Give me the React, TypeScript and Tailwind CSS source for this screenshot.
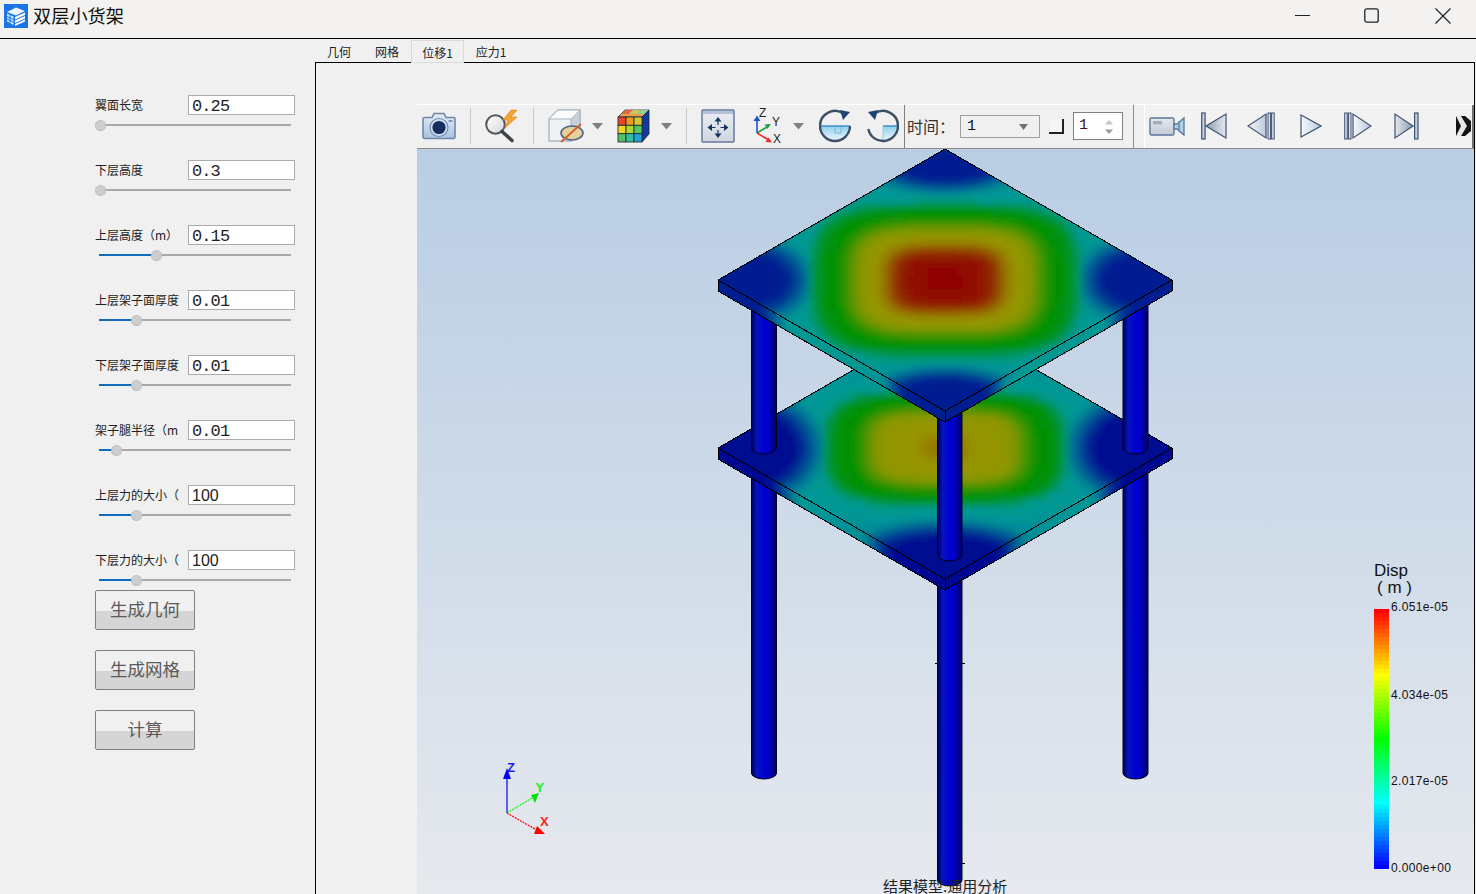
import React from "react";

type RGB = [number, number, number];
const mix = (stops: [number, RGB][], v: number): string => {
  const x = Math.max(0, Math.min(1, v));
  for (let i = 1; i < stops.length; i++) {
    if (x <= stops[i][0]) {
      const [p0, c0] = stops[i - 1];
      const [p1, c1] = stops[i];
      const t = (x - p0) / (p1 - p0);
      return `rgb(${c0.map((c, k) => Math.round(c + (c1[k] - c) * t)).join(",")})`;
    }
  }
  const l = stops[stops.length - 1][1];
  return `rgb(${l.join(",")})`;
};

const dimTop: [number, RGB][] = [[0, [0, 30, 145]], [0.25, [0, 152, 150]], [0.5, [0, 145, 0]], [0.75, [150, 150, 0]], [1, [143, 0, 0]]];
const dimLow: [number, RGB][] = [[0, [0, 8, 145]], [0.25, [0, 152, 150]], [0.5, [0, 145, 0]], [0.75, [150, 150, 0]], [1, [143, 0, 0]]];
const full: [number, RGB][] = [[0, [0, 0, 255]], [0.25, [0, 255, 255]], [0.5, [0, 255, 0]], [0.75, [255, 255, 0]], [1, [255, 0, 0]]];

const lerpTable = (tbl: [number, number][], r: number) => {
  for (let i = 1; i < tbl.length; i++) {
    if (r <= tbl[i][0]) {
      const t = (r - tbl[i - 1][0]) / (tbl[i][0] - tbl[i - 1][0]);
      return tbl[i - 1][1] + (tbl[i][1] - tbl[i - 1][1]) * t;
    }
  }
  return tbl[tbl.length - 1][1];
};

const radius = (a: number, b: number) => Math.pow(Math.pow(Math.abs(a), 3.6) + Math.pow(Math.abs(b), 3.6), 1 / 3.6);
const smooth = (e0: number, e1: number, x: number) => {
  const t = Math.max(0, Math.min(1, (x - e0) / (e1 - e0)));
  return t * t * (3 - 2 * t);
};
const lobe = (a: number, b: number, sideC: number, sideA: number, sideB: number, tipC: number, tipB: number, tipA: number) => {
  const ax = Math.abs(a);
  const bx = Math.abs(b);
  const d1 = Math.hypot((ax - sideC) / sideA, bx / sideB);
  const d2 = Math.hypot((bx - tipC) / tipB, ax / tipA);
  return 0.26 * smooth(0.55, 1.3, Math.min(d1, d2));
};

const topTable: [number, number][] = [[0, 1], [0.14, 0.98], [0.21, 0.93], [0.26, 0.82], [0.3, 0.76], [0.38, 0.72], [0.44, 0.58], [0.48, 0.5], [0.55, 0.46], [0.6, 0.3], [0.66, 0.25], [1, 0.2]];
const lowTable: [number, number][] = [[0, 0.83], [0.06, 0.8], [0.12, 0.76], [0.3, 0.73], [0.36, 0.6], [0.41, 0.5], [0.49, 0.47], [0.54, 0.3], [0.62, 0.25], [1, 0.2]];
const fieldTop = (a: number, b: number) => Math.min(lerpTable(topTable, radius(a, b)), lobe(a, b, 0.85, 0.24, 0.3, 0.88, 0.2, 0.32) + (radius(a, b) < 0.6 ? 1 : 0));
const fieldLow = (a: number, b: number) => {
  const r = radius(a, b * 1.2);
  return Math.min(lerpTable(lowTable, r), lobe(a, b, 0.84, 0.27, 0.38, 0.86, 0.28, 0.42) + (r < 0.54 ? 1 : 0));
};

const HW = 227;
const HH = 131;
const CX = 945;
const T = 11;

function Plate({ id, cy, field, stops }: { id: string; cy: number; field: (a: number, b: number) => number; stops: [number, RGB][] }) {
  const cells: React.ReactNode[] = [];
  const step = 7;
  for (let y = cy - HH - 14; y < cy + HH + 14; y += step) {
    for (let x = CX - HW - 14; x < CX + HW + 14; x += step) {
      const a = (x + step / 2 - CX) / HW;
      const b = (y + step / 2 - cy) / HH;
      cells.push(<rect key={`${x}-${y}`} x={x} y={y} width={step + 0.5} height={step + 0.5} fill={mix(stops, field(a, b))} />);
    }
  }
  const edgeStops = Array.from({ length: 31 }, (_, i) => {
    const t = i / 30;
    return <stop key={i} offset={t} stopColor={mix(stops, field(-1 + t, t))} />;
  });
  return (
    <g>
      <defs>
        <clipPath id={`clip-${id}`}>
          <polygon points={`${CX},${cy - HH} ${CX + HW},${cy} ${CX},${cy + HH} ${CX - HW},${cy}`} />
        </clipPath>
        <filter id={`blur-${id}`} filterUnits="userSpaceOnUse" x={CX - HW - 30} y={cy - HH - 30} width={2 * HW + 60} height={2 * HH + 60}>
          <feGaussianBlur stdDeviation="3.5" />
        </filter>
        <linearGradient id={`sideL-${id}`} gradientUnits="userSpaceOnUse" x1={CX - HW} x2={CX} y1="0" y2="0">
          {edgeStops}
        </linearGradient>
        <linearGradient id={`sideR-${id}`} gradientUnits="userSpaceOnUse" x1={CX + HW} x2={CX} y1="0" y2="0">
          {edgeStops}
        </linearGradient>
      </defs>
      <polygon points={`${CX - HW},${cy} ${CX},${cy + HH} ${CX},${cy + HH + T} ${CX - HW},${cy + T}`} fill={`url(#sideL-${id})`} />
      <polygon points={`${CX + HW},${cy} ${CX},${cy + HH} ${CX},${cy + HH + T} ${CX + HW},${cy + T}`} fill={`url(#sideR-${id})`} />
      <g clipPath={`url(#clip-${id})`}>
        <g filter={`url(#blur-${id})`}>{cells}</g>
      </g>
      <g fill="none" stroke="#000" strokeWidth="1" shapeRendering="crispEdges">
        <polygon points={`${CX},${cy - HH} ${CX + HW},${cy} ${CX},${cy + HH} ${CX - HW},${cy}`} />
        <polyline points={`${CX - HW},${cy} ${CX - HW},${cy + T} ${CX},${cy + HH + T} ${CX + HW},${cy + T} ${CX + HW},${cy}`} />
        <line x1={CX} y1={cy + HH} x2={CX} y2={cy + HH + T} />
      </g>
    </g>
  );
}

function Leg({ x1, x2, y1, y2, fill = "url(#legGrad)" }: { x1: number; x2: number; y1: number; y2: number; fill?: string }) {
  const rx = (x2 - x1) / 2;
  return <path d={`M${x1} ${y1} V${y2} A${rx} 6 0 0 0 ${x2} ${y2} V${y1} Z`} fill={fill} stroke="#000018" strokeWidth="1" />;
}

function Scene() {
  return (
    <svg className="absolute inset-0" width={1056} height={745} viewBox="417 149 1056 745">
      <defs>
        <linearGradient id="legGrad" x1="0" x2="1" y1="0" y2="0">
          <stop offset="0" stopColor="#00006e" />
          <stop offset="0.12" stopColor="#000a8c" />
          <stop offset="0.2" stopColor="#0616bc" />
          <stop offset="0.5" stopColor="#0000d0" />
          <stop offset="0.72" stopColor="#0000c8" />
          <stop offset="0.8" stopColor="#000096" />
          <stop offset="1" stopColor="#000070" />
        </linearGradient>
      </defs>
      <Leg x1={751.5} x2={776.5} y1={470} y2={773} />
      <Leg x1={1123} x2={1148} y1={470} y2={773} />
      <Leg x1={937.5} x2={962} y1={580} y2={880} />
      <path d="M935 663.5H938M962 663.5H965M962 863.5H965" stroke="#000" strokeWidth="1" shapeRendering="crispEdges" />
      <Plate id="low" cy={448} field={fieldLow} stops={dimLow} />
      <Leg x1={751.5} x2={776.5} y1={300} y2={448} />
      <Leg x1={1123} x2={1148} y1={300} y2={448} />
      <Leg x1={937.5} x2={962} y1={410} y2={555} />
      <Plate id="top" cy={280} field={fieldTop} stops={dimTop} />
      {/* triad */}
      <g>
        <line x1="507" y1="813" x2="507" y2="775" stroke="#0000ff" strokeWidth="1.2" />
        <polygon points="507,768 503,779 511,779" fill="#0000ff" />
        <line x1="507" y1="813" x2="532" y2="798" stroke="#00ff00" strokeWidth="1.2" strokeDasharray="2 1" />
        <polygon points="539,793 531,795 535,803" fill="#00e000" />
        <line x1="507" y1="813" x2="535" y2="829" stroke="#ff0000" strokeWidth="1.2" strokeDasharray="2 1" />
        <polygon points="545,834 537,826 534,834" fill="#ff0000" />
        <text x="507" y="772" fontFamily="Liberation Sans" fontWeight="700" fontSize="13" fill="#1a1aff">Z</text>
        <text x="535.5" y="792" fontFamily="Liberation Sans" fontWeight="700" fontSize="13" fill="#22ee22">Y</text>
        <text x="540" y="826" fontFamily="Liberation Sans" fontWeight="700" fontSize="13" fill="#ff2222">X</text>
      </g>
    </svg>
  );
}

const Sep = ({ ml }: { ml: string }) => <div className={`h-[36px] w-px bg-[#c9c9c9] ${ml}`} />;

const Caret = ({ ml }: { ml: string }) => (
  <svg width="11" height="7" viewBox="0 0 11 7" className={ml}>
    <polygon points="0,0 11,0 5.5,6.5" fill="#808080" />
  </svg>
);

const CameraIcon = () => (
  <svg width="34" height="30" viewBox="0 0 34 30" className="ml-[5px]">
    <defs>
      <linearGradient id="camG" x1="0" x2="0" y1="0" y2="1">
        <stop offset="0" stopColor="#e6edf6" />
        <stop offset="1" stopColor="#aac2de" />
      </linearGradient>
    </defs>
    <path d="M2.5 6.5H10L12 2.5H22L24 6.5H31.5A1.5 1.5 0 0 1 33 8V26A1.5 1.5 0 0 1 31.5 27.5H2.5A1.5 1.5 0 0 1 1 26V8A1.5 1.5 0 0 1 2.5 6.5Z" fill="url(#camG)" stroke="#6d87a8" strokeWidth="1.6" />
    <circle cx="17" cy="16.5" r="9" fill="#cfdff0" stroke="#6f8db4" strokeWidth="1.2" />
    <circle cx="17" cy="16.5" r="6.6" fill="#142f60" />
    <rect x="26.5" y="9" width="4" height="2" fill="#7d98b8" />
  </svg>
);

const MagnifierIcon = () => (
  <svg width="35" height="34" viewBox="0 0 35 34" className="ml-[14px]">
    <defs>
      <linearGradient id="lensG" x1="0" x2="1" y1="0" y2="1">
        <stop offset="0" stopColor="#ffffff" />
        <stop offset="1" stopColor="#d4d8dc" />
      </linearGradient>
    </defs>
    <circle cx="10.5" cy="15.5" r="9.3" fill="url(#lensG)" stroke="#55595d" strokeWidth="2" />
    <line x1="17" y1="22.5" x2="27" y2="31.5" stroke="#3d4246" strokeWidth="3.6" strokeLinecap="round" />
    <polygon points="26,1 18,11 23,11 20,19 32,8 26,8 32,1" fill="#f2a534" stroke="#dc8014" strokeWidth="0.6" />
  </svg>
);

const HideCubeIcon = () => (
  <svg width="36" height="34" viewBox="0 0 36 34" className="ml-[14px]">
    <polygon points="1,10 10,1 32,1 32,22 23,32 1,32" fill="#eef1f5" stroke="#aab6c4" strokeWidth="1.4" />
    <polygon points="1,10 10,1 32,1 23,10" fill="#fafbfc" stroke="#aab6c4" strokeWidth="1" />
    <polygon points="23,10 32,1 32,22 23,32" fill="#c8d0da" stroke="#aab6c4" strokeWidth="1" />
    <ellipse cx="24" cy="24" rx="11" ry="7" fill="#e6d09a" stroke="#4e6484" strokeWidth="1.6" />
    <line x1="13" y1="33" x2="33" y2="15" stroke="#d4602a" strokeWidth="1.8" />
  </svg>
);

const ColorCubeIcon = () => {
  const f = ["#e8442a", "#ec9a20", "#d8c830", "#f0d820", "#b0d830", "#50c860", "#50c060", "#30c0a0", "#20a0d8"];
  return (
    <svg width="33" height="34" viewBox="0 0 33 34" className="ml-[14px]">
      <polygon points="1,8 8,1 32,1 25,8" fill="#e8a050" stroke="#27303a" strokeWidth="0.8" />
      <polygon points="4,5 12,5 16,1 9,1" fill="#e06a40" />
      <polygon points="12,5 20,5 24,1 16,1" fill="#c8c860" />
      <polygon points="20,5 28,5 32,1 24,1" fill="#90d090" />
      <polygon points="25,8 32,1 32,25 25,33" fill="#123a9a" stroke="#1a2340" strokeWidth="0.8" />
      {f.map((c, i) => (
        <rect key={i} x={1 + (i % 3) * 8} y={8 + Math.floor(i / 3) * 8.33} width="8" height="8.33" fill={c} stroke="#26303c" strokeWidth="0.9" />
      ))}
    </svg>
  );
};

const FitIcon = () => (
  <svg width="34" height="34" viewBox="0 0 34 34" className="ml-[14px]">
    <defs>
      <linearGradient id="fitG" x1="0" x2="0" y1="0" y2="1">
        <stop offset="0" stopColor="#eceef3" />
        <stop offset="1" stopColor="#d0d5e0" />
      </linearGradient>
    </defs>
    <rect x="1" y="1" width="32" height="32" rx="1" fill="url(#fitG)" stroke="#66799e" strokeWidth="1.5" />
    <rect x="2" y="2" width="30" height="3" fill="#b4c2d8" />
    <g fill="#15355f">
      <path d="M17 8L13.5 12.5H20.5ZM17 29L13.5 24.5H20.5ZM6.5 18.5L11 15V22ZM27.5 18.5L23 15V22Z" />
    </g>
    <path d="M17 12V16M17 21V25M11 18.5H14.5M19.5 18.5H23" stroke="#15355f" strokeWidth="1.2" fill="none" />
  </svg>
);

const AxesIcon = () => (
  <svg width="31" height="42" viewBox="0 -3 31 42" className="ml-[17px]">
    <line x1="5" y1="25" x2="5" y2="12" stroke="#1c54c8" strokeWidth="1.6" />
    <polygon points="5,7.5 1.5,13 8.5,13" fill="#1c54c8" />
    <line x1="5" y1="25" x2="15" y2="19" stroke="#22a044" strokeWidth="1.6" />
    <polygon points="19,16 12.5,16.5 15.5,21" fill="#22a044" />
    <line x1="5" y1="25" x2="16" y2="31.5" stroke="#ee2a2a" strokeWidth="1.6" />
    <polygon points="20,34.5 13.5,34 16.5,29.5" fill="#ee2a2a" />
    <text x="7" y="9" fontFamily="Liberation Sans" fontSize="12" fill="#222">Z</text>
    <text x="20" y="18" fontFamily="Liberation Sans" fontSize="12" fill="#222">Y</text>
    <text x="21" y="35" fontFamily="Liberation Sans" fontSize="12" fill="#222">X</text>
  </svg>
);

const RotateIcon = ({ mirror, ml }: { mirror?: boolean; ml: string }) => (
  <svg width="32" height="34" viewBox="0 0 32 34" className={ml}>
    <defs>
      <linearGradient id={mirror ? "rotB" : "rotA"} x1="0" x2="0" y1="0" y2="1">
        <stop offset="0" stopColor="#8fd0ee" />
        <stop offset="1" stopColor="#eef8fd" />
      </linearGradient>
    </defs>
    {mirror ? (
      <g>
        <path d="M16 17H31A15 15 0 0 1 16 32Z" fill="url(#rotB)" />
        <line x1="16" y1="17" x2="31" y2="17" stroke="#2a86c0" strokeWidth="1.3" />
        <line x1="16" y1="17" x2="16" y2="32" stroke="#9cc8e0" strokeWidth="1" />
        <path d="M8 4.3A15 15 0 0 1 31 17A15 15 0 0 1 1.3 20" fill="none" stroke="#3c4f66" strokeWidth="2.4" />
        <polygon points="1,3 11,1 8,11" fill="#1f4474" />
      </g>
    ) : (
      <g>
        <path d="M1 17H31A15 15 0 0 1 1 17Z" fill="url(#rotA)" />
        <path d="M16 17V24H22V17" fill="none" stroke="#7db4d4" strokeWidth="1" />
        <line x1="1" y1="17" x2="31" y2="17" stroke="#2a86c0" strokeWidth="1.3" />
        <path d="M24 4.3A15 15 0 0 0 1 17A15 15 0 0 0 31 17" fill="none" stroke="#3c4f66" strokeWidth="2.4" />
        <polygon points="31,3 21,1 24,11" fill="#1f4474" />
      </g>
    )}
  </svg>
);

const mediaStroke = "#3f5272";
const MediaDefs = () => (
  <svg width="0" height="0" className="absolute">
    <defs>
      <linearGradient id="mLight" x1="0" x2="1" y1="0" y2="0">
        <stop offset="0" stopColor="#f6f8fb" />
        <stop offset="1" stopColor="#bccada" />
      </linearGradient>
      <linearGradient id="mDark" x1="0" x2="1" y1="0" y2="0">
        <stop offset="0" stopColor="#e4e9ef" />
        <stop offset="1" stopColor="#8e9cb0" />
      </linearGradient>
      <linearGradient id="mDarkR" x1="1" x2="0" y1="0" y2="0">
        <stop offset="0" stopColor="#e4e9ef" />
        <stop offset="1" stopColor="#8e9cb0" />
      </linearGradient>
      <linearGradient id="mBody" x1="0" x2="0" y1="0" y2="1">
        <stop offset="0" stopColor="#e4e8ef" />
        <stop offset="1" stopColor="#c4ccd8" />
      </linearGradient>
    </defs>
  </svg>
);

const VideoIcon = () => (
  <svg width="36" height="22" viewBox="0 0 36 22" className="ml-[4px]">
    <rect x="1" y="3" width="24" height="17" rx="1.5" fill="url(#mBody)" stroke="#5e7696" strokeWidth="1.4" />
    <rect x="4" y="6" width="9" height="3.5" fill="#a2aebe" />
    <path d="M25 9L28 9L35 3V20L28 14L25 14Z" fill="#b0d2e8" stroke="#5e7696" strokeWidth="1.3" />
    <rect x="29" y="6" width="2" height="11" fill="#6c98bc" />
  </svg>
);

const FirstIcon = () => (
  <svg width="26" height="28" viewBox="0 0 26 28" className="ml-[16px]">
    <rect x="0.7" y="1" width="3.4" height="26" fill="#c4d0de" stroke={mediaStroke} strokeWidth="1.2" />
    <polygon points="25,2 25,26 5,14" fill="url(#mDarkR)" stroke={mediaStroke} strokeWidth="1.2" />
  </svg>
);
const PrevIcon = () => (
  <svg width="28" height="28" viewBox="0 0 28 28" className="ml-[20px]">
    <polygon points="19,2 19,26 1,14" fill="url(#mLight)" stroke={mediaStroke} strokeWidth="1.2" />
    <rect x="21" y="1" width="2.6" height="26" fill="#d6dee8" stroke={mediaStroke} strokeWidth="1" />
    <rect x="24.6" y="1" width="2.6" height="26" fill="#d6dee8" stroke={mediaStroke} strokeWidth="1" />
  </svg>
);
const PlayIcon = () => (
  <svg width="22" height="28" viewBox="0 0 22 28" className="ml-[25px]">
    <polygon points="1,3 21,14 1,25" fill="url(#mLight)" stroke={mediaStroke} strokeWidth="1.2" />
  </svg>
);
const NextIcon = () => (
  <svg width="28" height="28" viewBox="0 0 28 28" className="ml-[22px]">
    <rect x="0.7" y="1" width="2.6" height="26" fill="#d6dee8" stroke={mediaStroke} strokeWidth="1" />
    <rect x="4.4" y="1" width="2.6" height="26" fill="#d6dee8" stroke={mediaStroke} strokeWidth="1" />
    <polygon points="9,2 9,26 27,14" fill="url(#mLight)" stroke={mediaStroke} strokeWidth="1.2" />
  </svg>
);
const LastIcon = () => (
  <svg width="25" height="28" viewBox="0 0 25 28" className="ml-[22px]">
    <polygon points="1,2 1,26 19,14" fill="url(#mDark)" stroke={mediaStroke} strokeWidth="1.2" />
    <rect x="20.6" y="1" width="3.4" height="26" fill="#c4d0de" stroke={mediaStroke} strokeWidth="1.2" />
  </svg>
);
const MoreIcon = () => (
  <svg width="15" height="24" viewBox="0 0 15 24" className="ml-[37px]">
    <rect x="0" y="2" width="15" height="20" fill="#141414" />
    <path d="M0 2H5L11 12L5 22H0L5 12Z" fill="#e8e8e8" />
    <path d="M9 2H15V7ZM15 17V22H9Z" fill="#f0f0f0" />
  </svg>
);

const fields: { label: string; value: string; pos: number; sans?: boolean }[] = [
  { label: "翼面长宽", value: "0.25", pos: 1 },
  { label: "下层高度", value: "0.3", pos: 1 },
  { label: "上层高度（m）", value: "0.15", pos: 57 },
  { label: "上层架子面厚度", value: "0.01", pos: 37 },
  { label: "下层架子面厚度", value: "0.01", pos: 37 },
  { label: "架子腿半径（m", value: "0.01", pos: 17 },
  { label: "上层力的大小（", value: "100", pos: 37, sans: true },
  { label: "下层力的大小（", value: "100", pos: 37, sans: true },
];

const cjk = "font-['Noto_Sans_CJK_SC','Liberation_Sans',sans-serif]";

function Field({ label, value, pos, sans }: { label: string; value: string; pos: number; sans?: boolean }) {
  return (
    <div className="flex flex-col">
      <div className="flex h-[20px] items-center">
        <div className="w-[93px] overflow-hidden whitespace-nowrap text-[12px] leading-[20px] text-[#222]">{label}</div>
        <div
          className={`flex h-[20px] w-[107px] items-center border border-[#acacac] bg-white pl-[3px] text-[#222] ${
            sans
              ? "pt-[2px] text-[16px] font-['Liberation_Sans',sans-serif]"
              : "pt-[3px] text-[17px] tracking-[-0.9px] font-['Liberation_Mono',monospace]"
          }`}
        >
          {value}
        </div>
      </div>
      <div className="relative mt-[4px] ml-[4px] flex h-[12px] w-[192px] items-center">
        <div className="relative h-[2px] w-full bg-[#a9a9a9]">
          <div className="h-full bg-[#0f6cbd]" style={{ width: pos }} />
        </div>
        <div
          className="absolute top-[0.5px] h-[11px] w-[11px] rounded-full border border-dotted border-[#b0b0b0] bg-[#cdcdcd]"
          style={{ left: pos - 5.5 }}
        />
      </div>
    </div>
  );
}

function Btn({ text }: { text: string }) {
  return (
    <div className="flex h-[40px] w-[100px] items-center justify-center rounded-[2px] border border-[#808080] bg-[linear-gradient(#f0f0f0_0%,#f0f0f0_52%,#d5d5d5_52%,#d5d5d5_100%)] pb-[2px] text-[17.5px] text-[#5a5a5a]">
      {text}
    </div>
  );
}

function Tab({ text, w, active }: { text: string; w: string; active?: boolean }) {
  return (
    <div
      className={`relative flex h-[23px] items-center justify-center pt-[3px] text-[12px] text-[#222] ${w} ${
        active ? "z-10 -mb-px border border-[#d9d9d9] bg-[#f0f0f0]" : ""
      }`}
    >
      {text}
    </div>
  );
}

const bands = Array.from({ length: 65 }, (_, i) => mix(full, 1 - i / 64));

export default function App() {
  return (
    <div className={`flex h-[894px] w-[1476px] flex-col overflow-hidden bg-[#f0f0f0] ${cjk}`}>
      <MediaDefs />
      {/* title bar */}
      <div className="flex h-[39px] shrink-0 items-center border-b border-black bg-[#f3f2f0] pb-[7px]">
        <svg width="24" height="24" viewBox="0 0 24 24" className="ml-[4px]">
          <rect width="24" height="24" fill="#1a76e6" />
          <path d="M3 8L12 3.5L21 7L12 11.5Z" fill="#eaf3ff" />
          <path d="M3 9.5L9.5 12.5V21L3 17.5Z" fill="#cfe3fb" />
          <path d="M3 12.5L9.5 15.5M3 15L9.5 18.2M6 11V19" stroke="#1a76e6" strokeWidth="1" fill="none" />
          <path d="M11 13L21 8.5V11L11 15.5ZM11 16.5L21 12V14.5L11 19ZM11 20L21 15.5V17.5L11 22Z" fill="#fff" />
        </svg>
        <div className="-mt-[2px] ml-[5px] text-[18.2px] leading-[24px] text-[#111]">双层小货架</div>
        <div className="ml-auto flex items-center">
          <svg width="15" height="15" viewBox="0 0 15 15" className="mr-[54px]">
            <line x1="0" y1="7.5" x2="15" y2="7.5" stroke="#222" strokeWidth="1" />
          </svg>
          <svg width="15" height="15" viewBox="0 0 15 15" className="mr-[56px]">
            <rect x="0.8" y="0.8" width="13.4" height="13.4" rx="2" fill="none" stroke="#222" strokeWidth="1.3" />
          </svg>
          <svg width="16" height="16" viewBox="0 0 16 16" className="mr-[25px]">
            <path d="M0.5 0.5L15.5 15.5M15.5 0.5L0.5 15.5" stroke="#222" strokeWidth="1.2" />
          </svg>
        </div>
      </div>

      <div className="flex min-h-0 flex-1">
        {/* left column */}
        <div className="flex w-[315px] shrink-0 flex-col pl-[95px] pt-[56px]">
          <div className="flex flex-col gap-[29px]">
            {fields.map((f) => (
              <Field key={f.label} {...f} />
            ))}
          </div>
          <div className="mt-[4px] flex flex-col gap-[20px]">
            <Btn text="生成几何" />
            <Btn text="生成网格" />
            <Btn text="计算" />
          </div>
        </div>

        {/* right column */}
        <div className="flex min-w-0 flex-1 flex-col pr-[1px]">
          <div className="flex h-[23px] shrink-0 items-end">
            <Tab text="几何" w="w-[48px]" />
            <Tab text="网格" w="w-[48px]" />
            <Tab text="位移1" w="w-[53px]" active />
            <Tab text="应力1" w="w-[54px]" />
          </div>
          <div className="flex min-h-0 flex-1 flex-col border-x border-t border-black pl-[101px] pt-[41px]">
            {/* toolbar */}
            <div className="flex h-[45px] shrink-0 items-center border-t border-b border-t-white border-b-[#8c8c8c] bg-[#f0f0f0] pb-px">
              <CameraIcon />
              <Sep ml="ml-[14px]" />
              <MagnifierIcon />
              <Sep ml="ml-[13px]" />
              <HideCubeIcon />
              <Caret ml="ml-[8px]" />
              <ColorCubeIcon />
              <Caret ml="ml-[11px]" />
              <Sep ml="ml-[14px]" />
              <FitIcon />
              <AxesIcon />
              <Caret ml="ml-[10px]" />
              <RotateIcon ml="ml-[15px]" />
              <RotateIcon mirror ml="ml-[16px]" />
              <div className="ml-[5px] h-[43px] w-px self-start bg-[#808080]" />
              <div className="ml-[2px] w-[53px] whitespace-nowrap text-[16px] text-[#333]">时间：</div>
              <div className="flex h-[23px] w-[80px] items-center justify-between border border-[#a0a0a0] bg-[#f0f0f0] pl-[6px] pr-[11px] pt-[2px] text-[15px] text-[#111] font-['Liberation_Mono',monospace]">
                <span>1</span>
                <svg width="9" height="6" viewBox="0 0 9 6">
                  <polygon points="0,0 9,0 4.5,6" fill="#707070" />
                </svg>
              </div>
              <div className="ml-[9px] h-[15px] w-[15px] border-r-2 border-b-2 border-r-[#222] border-b-[#222] bg-[#f4f4f4]" />
              <div className="ml-[9px] flex h-[28px] w-[50px] items-center justify-between border border-[#808080] bg-white pl-[5px] pr-[9px] pt-[1px] text-[15px] text-[#3a1010] font-['Liberation_Mono',monospace]">
                <span>1</span>
                <svg width="8" height="16" viewBox="0 0 8 16">
                  <polygon points="4,1 0,5.5 8,5.5" fill="#c4c4c4" />
                  <polygon points="4,15 0,10.5 8,10.5" fill="#9a9a9a" />
                </svg>
              </div>
              <div className="ml-[10px] h-[43px] w-px self-start bg-[#909090]" />
              <div className="ml-[10px] flex h-[43px] flex-1 items-center self-start border-l border-r-2 border-l-white border-r-[#707070] bg-[#f2f2f2] pb-px">
                <VideoIcon />
                <FirstIcon />
                <PrevIcon />
                <PlayIcon />
                <NextIcon />
                <LastIcon />
                <MoreIcon />
              </div>
            </div>

            {/* viewport */}
            <div className="relative min-h-0 flex-1 overflow-hidden bg-[linear-gradient(#b9cde4,#e6e9ee)]">
              <Scene />
              {/* legend */}
              <div className="absolute left-[957px] top-[413px] text-[17px] leading-[17px] text-[#111] font-['Liberation_Sans',sans-serif]">
                Disp
                <div className="pl-[3px]">( m )</div>
              </div>
              <div className="absolute left-[957px] top-[460px] flex h-[260px] w-[15px] flex-col">
                {bands.map((c, i) => (
                  <div key={i} className="flex-1" style={{ backgroundColor: c }} />
                ))}
              </div>
              {[
                ["6.051e-05", "top-[451px]"],
                ["4.034e-05", "top-[539px]"],
                ["2.017e-05", "top-[625px]"],
                ["0.000e+00", "top-[712px]"],
              ].map(([t, p]) => (
                <div key={t} className={`absolute left-[974px] text-[12px] leading-[14px] tracking-[0.35px] text-[#111] font-['Liberation_Sans',sans-serif] ${p}`}>
                  {t}
                </div>
              ))}
              <div className="absolute left-[466px] top-[727px] whitespace-nowrap text-[15px] leading-[20px] text-[#222]">结果模型:通用分析</div>
            </div>
          </div>
        </div>
      </div>
    </div>
  );
}
